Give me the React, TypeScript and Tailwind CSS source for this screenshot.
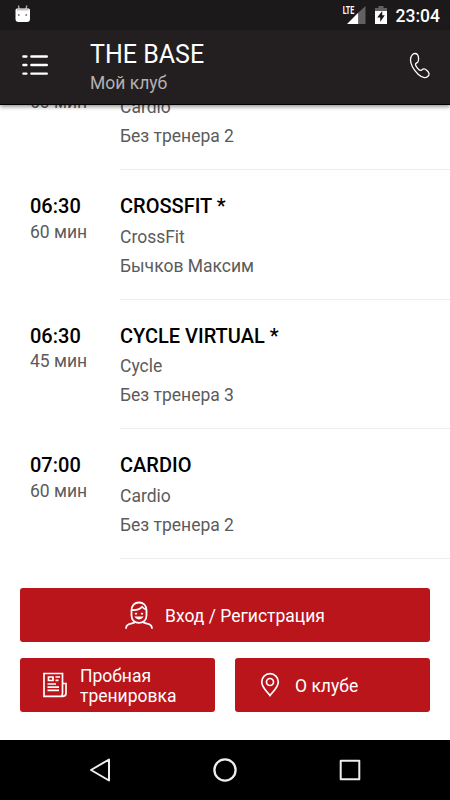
interface Workout {
  time?: string;
  duration: string;
  title?: string;
  type: string;
  trainer: string;
}

const workouts: Workout[] = [
  { duration: '60 мин', type: 'Cardio', trainer: 'Без тренера 2' },
  { time: '06:30', duration: '60 мин', title: 'CROSSFIT *', type: 'CrossFit', trainer: 'Бычков Максим' },
  { time: '06:30', duration: '45 мин', title: 'CYCLE VIRTUAL *', type: 'Cycle', trainer: 'Без тренера 3' },
  { time: '07:00', duration: '60 мин', title: 'CARDIO', type: 'Cardio', trainer: 'Без тренера 2' },
];

function StatusBar() {
  return (
    <div className="flex h-[30px] shrink-0 items-center justify-between bg-[#1b191a] pl-[14px] pr-[10px]">
      <svg width="18" height="30" viewBox="0 0 18 30">
        <path d="M4.400 5.500 5.200 9M12.800 5.500 12 9" stroke="#aaa" strokeWidth="1.300" />
        <path d="M3 8.500h11.500q1.500 0 1.500 1.500v9q0 3-3 3h-8.500q-3 0-3-3V10q0-1.500 1.500-1.500Z" fill="#fff" />
        <path d="M3 8.800h11.500v1.700H3Z" fill="#c4c4c4" />
        <circle cx="4.800" cy="15" r="0.900" fill="#777" />
        <circle cx="12.200" cy="15" r="0.900" fill="#777" />
      </svg>
      <div className="flex items-center">
        <svg width="24" height="30" viewBox="0 0 24 30">
          <path d="M16.200 12.700 23.500 6v18h-7.300Z" fill="#626061" />
          <path d="M5 24 16.200 12.700V24Z" fill="#fff" />
          <text x="0.700" y="14" fontSize="10.500" fontWeight="700" fontFamily="Roboto, sans-serif" textLength="11.500" lengthAdjust="spacingAndGlyphs" fill="#fff">
            LTE
          </text>
        </svg>
        <svg className="ml-[9px]" width="12" height="30" viewBox="0 0 12 30">
          <path d="M3.500 6h5v2H12v4H0V8h3.500Z" fill="#626061" />
          <path d="M0 11h12v13H0Z" fill="#fff" />
          <path d="M7.200 11 2.200 17.500h3V22L9.800 15.300H7.200Z" fill="#1b191a" />
        </svg>
        <span className="ml-[9px] pt-px text-[17.500px] leading-[30px] font-medium text-white">23:04</span>
      </div>
    </div>
  );
}

function Header() {
  return (
    <header className="z-10 flex h-[75px] shrink-0 border-b border-black bg-[#231f20] pl-[22px] pr-[19px] text-white shadow-[0_2px_4px_rgba(0,0,0,0.4)]">
      <svg className="mt-[23px] shrink-0" width="27" height="24" viewBox="0 0 27 24" stroke="#fff" strokeWidth="2.400" strokeLinecap="round">
        <path d="M1.400 3.500h3M9.400 3.500h15.400M1.400 12h3M9.400 12h15.400M1.400 20.600h3M9.400 20.600h15.400" />
      </svg>
      <div className="ml-[41px] flex-1 pt-[10px]">
        <h1 className="text-[25px] leading-[30px]">THE BASE</h1>
        <p className="text-[17.500px] leading-[26px] text-[#b3b1b2]">Мой клуб</p>
      </div>
      <svg className="mt-[22px]" width="22" height="28" viewBox="0 0 22 28" fill="none" stroke="#fff" strokeWidth="1.300" strokeLinejoin="round">
        <path d="M3.200 2.900C4.700 1.100 7.200 1 8.500 2.700c1.300 1.800 1.400 5.400.4 7.100-.8 1.200-2.400 1.300-2.400 2.500 0 1.900 3.300 6.100 5 6.100 1.300 0 1.800-1.500 3.300-1.600 1.800-.1 4.900 2.800 5.200 4.800.3 2.400-2.100 4.200-4.600 4C11.500 25.200 6.500 20.500 3.400 14.700 1.500 10.900.7 5.900 3.200 2.900Z" />
      </svg>
    </header>
  );
}

function WorkoutRow({ workout }: { workout: Workout }) {
  return (
    <div className="flex h-[129.500px] shrink-0 pl-[30px] text-[17.500px] text-[#5b5b5b]">
      <div className="w-[90px] shrink-0 pt-6">
        <div className="h-6 text-[20px] leading-6 font-medium text-black">{workout.time}</div>
        <div className="mt-[0.400px] leading-[26px]">{workout.duration}</div>
      </div>
      <div className="flex-1 border-b-[1.500px] border-[#ececec] pt-6">
        <div className="h-6 text-[20px] leading-6 font-medium text-black">{workout.title}</div>
        <div className="mt-[4.400px] leading-[29px]">{workout.type}</div>
        <div className="leading-[29px]">{workout.trainer}</div>
      </div>
    </div>
  );
}

function UserIcon() {
  return (
    <svg width="28" height="28" viewBox="0 0 28 28" fill="none" stroke="#fff" strokeWidth="1.800" strokeLinecap="round">
      <path d="M6.500 9.500C6.500 4.500 9.500 1.500 14 1.500S21.500 4.500 21.500 9.500v5c0 4.300-3 7.400-7.500 7.400S6.500 18.800 6.500 14.500Z" />
      <path d="M7 9c4 .3 8-1 10-3.200C18.200 7.300 19.500 8 21 8.300" />
      <path d="M10.700 12.700h.6M16.700 12.700h.6M11.300 16.500c1.300 1.500 4.100 1.500 5.400 0Z" />
      <path d="M10 21c-1 1.600-6 1-8 3.500-.5.700-.8 1.500-.9 2.500M18 21c1 1.600 6 1 8 3.500.5.700.8 1.500.9 2.500" />
    </svg>
  );
}

function NewsIcon() {
  return (
    <svg width="26" height="26" viewBox="0 0 26 26" fill="none" stroke="#fff" strokeWidth="1.700">
      <path d="M20.500 11.500V1.500H2V24.300h19c2 0 3-1 3-3v-9.800h-3.500v10c0 1.500-.4 2.500-1.500 2.800" />
      <path d="M6.500 5H11v3.500H6.500Z" />
      <path d="M13.500 5H18M13.500 8.300h3M5.500 12H14M5.500 15.200H17M5.500 18.300H17" />
    </svg>
  );
}

function PinIcon() {
  return (
    <svg width="20" height="26" viewBox="0 0 20 26" fill="none" stroke="#fff" strokeWidth="1.700">
      <path d="M10 23.500C7.500 20 1.700 15.500 1.700 10a8.300 8.300 0 0 1 16.600 0c0 5.500-5.800 10-8.300 13.500Z" />
      <circle cx="10" cy="10" r="3.500" />
    </svg>
  );
}

function NavigationBar() {
  return (
    <nav className="flex h-[60px] shrink-0 items-center justify-between bg-black px-[87px]">
      <svg width="25" height="28" viewBox="0 0 25 28" fill="none" stroke="#eee" strokeWidth="2" strokeLinejoin="round">
        <path d="M22 3.500v21L4 14Z" />
      </svg>
      <svg width="26" height="28" viewBox="0 0 26 28" fill="none" stroke="#eee" strokeWidth="2.300">
        <circle cx="13" cy="14" r="10.600" />
      </svg>
      <svg width="26" height="28" viewBox="0 0 26 28" fill="none" stroke="#eee" strokeWidth="2" strokeLinejoin="round">
        <path d="M3.700 4.700h18.600v18.600H3.700Z" />
      </svg>
    </nav>
  );
}

export default function App() {
  return (
    <div className="flex h-[800px] w-[450px] flex-col overflow-hidden bg-white font-[Roboto,sans-serif]">
      <StatusBar />
      <Header />
      <main className="flex h-[483px] shrink-0 flex-col overflow-hidden">
        <div className="-mt-[64.200px] flex flex-col">
          {workouts.map((workout, index) => (
            <WorkoutRow key={index} workout={workout} />
          ))}
        </div>
      </main>
      <div className="flex flex-1 flex-col gap-[16px] px-5 text-[17.500px] text-white">
        <button className="flex h-[54px] items-center justify-center rounded-[3px] bg-[#b9151b]">
          <UserIcon />
          <span className="ml-3 pt-[2px]">Вход / Регистрация</span>
        </button>
        <div className="flex gap-5">
          <button className="flex h-[54px] w-[195px] items-center rounded-[3px] bg-[#b9151b] pl-[22px] text-left">
            <NewsIcon />
            <span className="ml-3 pt-px leading-[20px]">
              Пробная
              <br />
              тренировка
            </span>
          </button>
          <button className="flex h-[54px] w-[195px] items-center rounded-[3px] bg-[#b9151b] pl-[25px] text-left">
            <PinIcon />
            <span className="ml-[15px] pt-[2px]">О клубе</span>
          </button>
        </div>
      </div>
      <NavigationBar />
    </div>
  );
}
